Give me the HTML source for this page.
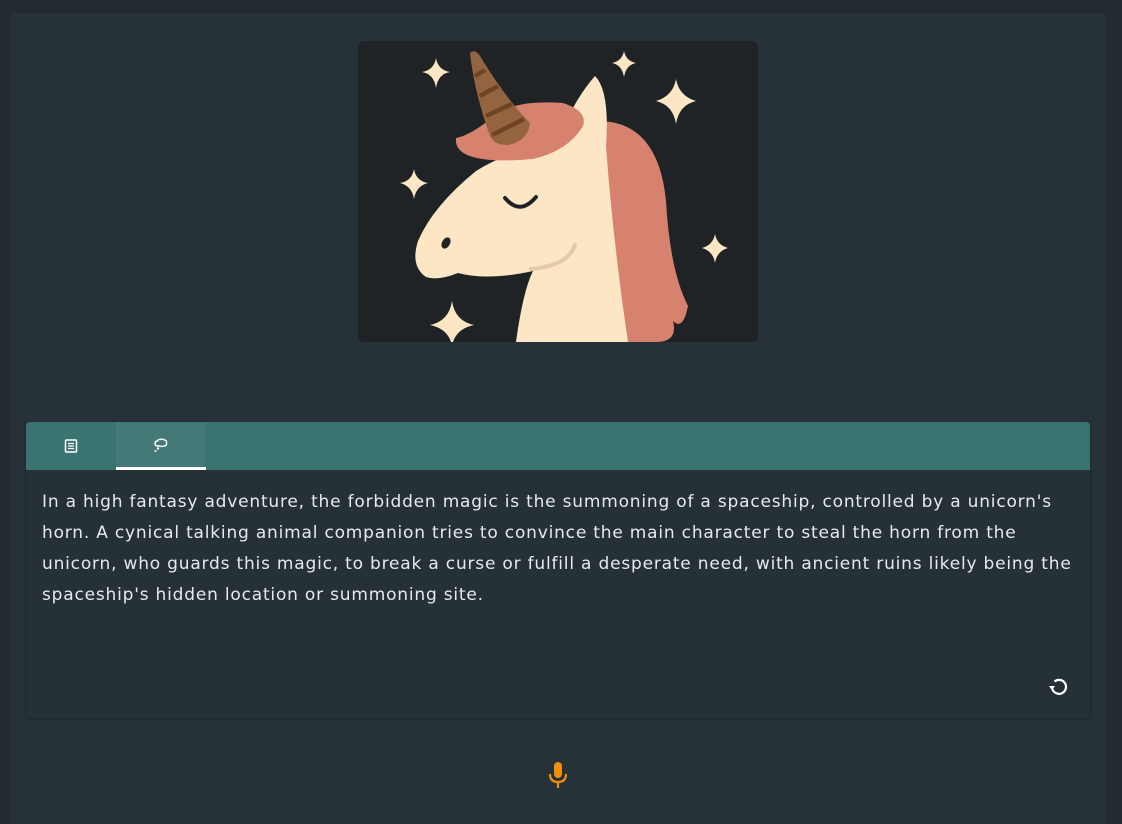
<!DOCTYPE html>
<html><head><style>
html,body{margin:0;width:1122px;height:824px;overflow:hidden}
body{background:#222b31;font-family:"Liberation Sans",sans-serif;position:relative}
.panel{position:absolute;left:10px;top:13px;width:1096px;height:811px;background:#273238;border-radius:4px 4px 0 0}
.img{position:absolute;left:358px;top:41px;width:400px;height:301px;border-radius:6px;overflow:hidden;background:#1f2326}
.card{position:absolute;left:26px;top:422px;width:1064px;height:296px;background:#263137;border-radius:4px;box-shadow:0 1px 3px rgba(0,0,0,.35)}
.tabs{height:48px;background:#3a7470;border-radius:4px 4px 0 0;position:relative}
.tab{position:absolute;top:0;height:48px;width:90px;display:flex;align-items:center;justify-content:center}
.t2{left:90px;background:#437a77;border-bottom:3px solid #fff;box-sizing:border-box;height:48px}
.txt{position:absolute;left:16px;top:65px;color:#e6eaec;font-family:"DejaVu Sans",sans-serif;font-size:17px;letter-spacing:0.8px;line-height:31px;white-space:nowrap}
</style></head><body>
<div class="panel"></div>
<div class="img"><svg width="400" height="301" viewBox="0 0 400 301">
<g fill="#fce6c4">
<path d="M78 17 Q80 29 92 31 Q80 33 78 47 Q76 33 64 31 Q76 29 78 17Z"/>
<path d="M266 10 Q268 20 278 22 Q268 24 266 36 Q264 24 254 22 Q264 20 266 10Z"/>
<path d="M318 38 Q321 55 338 60 Q321 64 318 83 Q315 64 298 60 Q315 55 318 38Z"/>
<path d="M56 128 Q58 140 70 142 Q58 145 56 158 Q54 145 42 142 Q54 140 56 128Z"/>
<path d="M357 193 Q359 204 370 207 Q359 210 357 222 Q355 210 344 207 Q355 204 357 193Z"/>
<path d="M94 260 Q97 280 116 284 Q97 288 94 305 Q91 288 72 284 Q91 280 94 260Z"/>
</g>
<path d="M240 80 Q300 80 308 160 Q312 230 330 265 Q325 290 315 280 Q320 300 300 301 L250 301Z" fill="#d6826f"/>
<path d="M158 301 Q165 250 175 230 Q130 240 100 232 Q80 240 68 236 Q52 225 60 200 Q75 165 118 130 Q150 110 200 100 Q215 60 237 35 Q252 50 248 105 Q255 200 270 301Z" fill="#fce6c4"/>
<path d="M98 97 Q95 125 175 118 Q210 110 225 85 Q230 70 205 62 Q150 58 130 80 Q110 95 98 97Z" fill="#d6826f"/>
<path d="M112 12 Q118 6 125 20 Q150 60 172 82 Q170 100 150 104 Q136 104 132 95 Q116 50 112 12Z" fill="#946440"/>
<path d="M117 35 L127 29 M122 55 L140 45 M128 75 L154 63 M134 94 L166 78" stroke="#6e4424" stroke-width="4.5"/>
<path d="M147 157 Q162 175 178 156" stroke="#1f2326" stroke-width="4" fill="none" stroke-linecap="round"/>
<ellipse cx="88" cy="202" rx="4" ry="6" fill="#1f2326" transform="rotate(30 88 202)"/>
<path d="M217 204 Q210 225 173 228" stroke="#e3c9a8" stroke-width="4" fill="none" stroke-linecap="round"/>
</svg></div>
<div class="card">
<div class="tabs">
<div class="tab" style="left:0"><svg width="16" height="16" viewBox="0 0 16 16"><rect x="2.5" y="2" width="11" height="12" rx="1" fill="none" stroke="#fff" stroke-width="1.5"/><path d="M5 5.5h6M5 8h6M5 10.5h6" stroke="#fff" stroke-width="1.3"/></svg></div>
<div class="tab t2"><svg width="18" height="16" viewBox="0 0 18 16"><path d="M6 9 Q3 9 3 6.5 Q3 4 5.5 4 Q6 2 8.5 2.5 Q10 1.5 12 2.8 Q15 3 14.5 6 Q15 9 12 9 Q10 10 8 9Z" fill="none" stroke="#fff" stroke-width="1.4"/><circle cx="6" cy="11.5" r="1.2" fill="#fff"/><circle cx="3.5" cy="14" r="1" fill="#fff"/></svg></div>
</div>
<div class="txt">In a high fantasy adventure, the forbidden magic is the summoning of a spaceship, controlled by a unicorn's<br>horn. A cynical talking animal companion tries to convince the main character to steal the horn from the<br>unicorn, who guards this magic, to break a curse or fulfill a desperate need, with ancient ruins likely being the<br>spaceship's hidden location or summoning site.</div>
<svg style="position:absolute;left:1021px;top:254px" width="22" height="22" viewBox="0 0 22 22"><path d="M5 11 A7 7 0 1 0 7.5 5.5" fill="none" stroke="#fff" stroke-width="2.2"/><path d="M2 10 L8 10 L5 14Z" fill="#fff"/></svg>
</div>
<svg style="position:absolute;left:547px;top:761px" width="22" height="30" viewBox="0 0 22 30"><rect x="7" y="1" width="8" height="16" rx="4" fill="#f0900a"/><path d="M3 13 Q3 21 11 21 Q19 21 19 13" fill="none" stroke="#f0900a" stroke-width="2.2"/><path d="M11 21 V27" stroke="#f0900a" stroke-width="2.2"/></svg>
</body></html>
